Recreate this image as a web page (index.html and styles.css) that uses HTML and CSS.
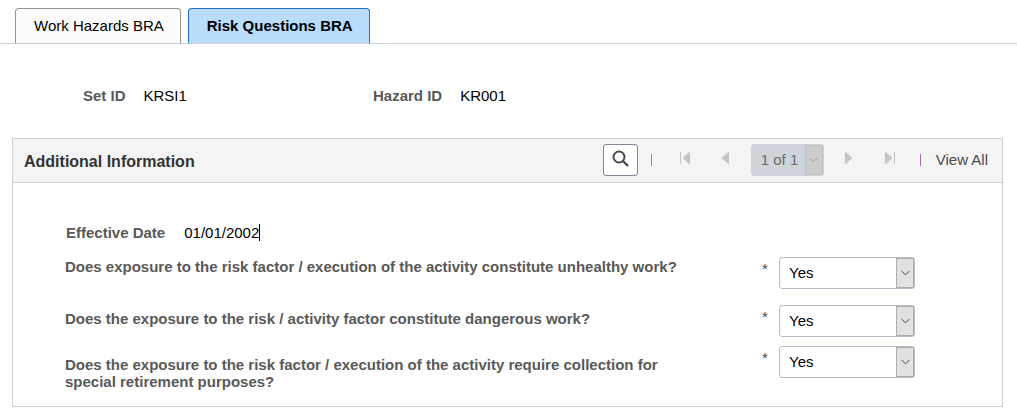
FILE: index.html
```html
<!DOCTYPE html>
<html lang="en">
<head>
  <meta charset="UTF-8">
  <title>Risk Questions BRA</title>
  <link rel="stylesheet" href="styles.css">
</head>
<body>
  <nav class="tabs">
    <button type="button" class="tab">Work Hazards BRA</button>
    <button type="button" class="tab active">Risk Questions BRA</button>
  </nav>

  <dl class="keys">
    <div class="key">
      <dt>Set ID</dt>
      <dd>KRSI1</dd>
    </div>
    <div class="key">
      <dt>Hazard ID</dt>
      <dd>KR001</dd>
    </div>
  </dl>

  <section class="panel">
    <header class="panel-header">
      <h2>Additional Information</h2>
      <div class="pager">
        <button type="button" class="search" aria-label="Find">
          <svg width="17" height="17" viewBox="0 0 17 17"><circle cx="7" cy="7" r="5.5" fill="none" stroke="#4a4a4a" stroke-width="2"/><path d="M11 11l5 5" stroke="#4a4a4a" stroke-width="2.4"/></svg>
        </button>
        <span class="divider green"></span>
        <button type="button" class="nav first" aria-label="First" disabled>
          <svg width="12" height="14" viewBox="0 0 12 14"><path d="M1.5 1v12" stroke="#c4c4c4"/><path d="M11 0.5v13L3.5 7z" fill="#c4c4c4"/></svg>
        </button>
        <button type="button" class="nav prev" aria-label="Previous" disabled>
          <svg width="8" height="14" viewBox="0 0 8 14"><path d="M8 0.5v13L0.5 7z" fill="#c4c4c4"/></svg>
        </button>
        <span class="select-box page-box">
          <select aria-label="Row" disabled>
            <option>1 of 1</option>
          </select>
          <span class="arrow"><svg width="9" height="6" viewBox="0 0 9 6"><path d="M0.5 0.8l4 4 4-4" fill="none" stroke="currentColor"/></svg></span>
        </span>
        <button type="button" class="nav next" aria-label="Next" disabled>
          <svg width="8" height="14" viewBox="0 0 8 14"><path d="M0 0.5v13L7.5 7z" fill="#c4c4c4"/></svg>
        </button>
        <button type="button" class="nav last" aria-label="Last" disabled>
          <svg width="12" height="14" viewBox="0 0 12 14"><path d="M10.5 1v12" stroke="#c4c4c4"/><path d="M1 0.5v13L8.5 7z" fill="#c4c4c4"/></svg>
        </button>
        <span class="divider purple"></span>
        <button type="button" class="view-all">View All</button>
      </div>
    </header>

    <div class="panel-body">
      <div class="date-row">
        <span class="date-label">Effective Date</span>
        <span class="date-value">01/01/2002</span>
      </div>

      <div class="question">
        <label for="q1">Does exposure to the risk factor / execution of the activity constitute unhealthy work?</label>
        <span class="required">*</span>
        <span class="select-box">
          <select id="q1" required>
            <option>Yes</option>
            <option>No</option>
          </select>
          <span class="arrow"><svg width="9" height="6" viewBox="0 0 9 6"><path d="M0.5 0.8l4 4 4-4" fill="none" stroke="currentColor"/></svg></span>
        </span>
      </div>

      <div class="question middle">
        <label for="q2">Does the exposure to the risk / activity factor constitute dangerous work?</label>
        <span class="required">*</span>
        <span class="select-box">
          <select id="q2" required>
            <option>Yes</option>
            <option>No</option>
          </select>
          <span class="arrow"><svg width="9" height="6" viewBox="0 0 9 6"><path d="M0.5 0.8l4 4 4-4" fill="none" stroke="currentColor"/></svg></span>
        </span>
      </div>

      <div class="question long">
        <label for="q3">Does the exposure to the risk factor / execution of the activity require collection for special retirement purposes?</label>
        <span class="required">*</span>
        <span class="select-box">
          <select id="q3" required>
            <option>Yes</option>
            <option>No</option>
          </select>
          <span class="arrow"><svg width="9" height="6" viewBox="0 0 9 6"><path d="M0.5 0.8l4 4 4-4" fill="none" stroke="currentColor"/></svg></span>
        </span>
      </div>
    </div>
  </section>
</body>
</html>
```

FILE: styles.css
```css
* {
  box-sizing: border-box;
}
body {
  margin: 0;
  background: #fff;
  color: #000;
  font-family: "Liberation Sans", Arial, sans-serif;
  font-size: 15px;
  line-height: 17px;
}
button, select {
  font: inherit;
  color: inherit;
}

/* tabs */
.tabs {
  display: flex;
  gap: 7px;
  padding: 8px 15px 0;
  border-bottom: 1px solid #cdd0d8;
}
.tab {
  height: 35px;
  padding: 0 16px 2px 18px;
  background: #fcfcfc;
  border: 1px solid #949494;
  border-bottom: none;
  border-radius: 4px 4px 0 0;
}
.tab.active {
  background: #b9dcfb;
  border-color: #1f6fc5;
  font-weight: bold;
}

/* key fields */
.keys {
  display: flex;
  margin: 0;
  padding: 43px 83px 34px;
}
.key {
  display: flex;
  gap: 18px;
  min-width: 290px;
}
.key dt {
  color: #595959;
  font-weight: bold;
}
.key dd {
  margin: 0;
}

/* panel */
.panel {
  margin: 0 14px 7px 12px;
  border: 1px solid #cdd0d8;
}
.panel-header {
  display: flex;
  justify-content: space-between;
  align-items: center;
  height: 44px;
  padding: 0 14px 2px 11px;
  background: #f4f4f4;
  border-bottom: 1px solid #cdd0d8;
}
.panel-header h2 {
  margin: 0;
  padding-top: 3px;
  color: #333;
  font-size: 16px;
}
.pager {
  display: flex;
  align-items: center;
  color: #4a4a4a;
}
.search {
  display: flex;
  align-items: center;
  justify-content: center;
  width: 35px;
  height: 32px;
  padding: 0 0 2px;
  background: #fff;
  border: 1px solid #7d8592;
  border-radius: 3px;
}
.divider {
  width: 1px;
  height: 12px;
}
.divider.green {
  margin: 0 27px 0 13px;
  background: #4fbf6f;
}
.divider.purple {
  margin: 0 15px 0 24px;
  background: #b565b5;
}
.nav {
  display: flex;
  padding: 0 0 3px;
  background: none;
  border: none;
}
.prev {
  margin: 0 22px 0 30px;
}
.next {
  margin: 0 31px 0 21px;
}
.view-all {
  padding: 0;
  background: none;
  border: none;
}

/* drop-downs */
.select-box {
  position: relative;
  width: 136px;
  height: 32px;
}
.select-box select {
  appearance: none;
  width: 100%;
  height: 100%;
  padding: 0 26px 2px 9px;
  background: #fff;
  border: 1px solid #b5bdc9;
  border-radius: 3px;
}
.arrow {
  position: absolute;
  top: 1px;
  right: 1px;
  bottom: 1px;
  display: flex;
  align-items: center;
  justify-content: center;
  width: 18px;
  background: #e1e1e1;
  border: 1px solid #adadad;
  color: #444;
  pointer-events: none;
}
.page-box {
  width: 73px;
}
.page-box select {
  padding: 0 19px 0 9px;
  background: #cfd4db;
  border-color: #cfd4db;
  color: #676b72;
  opacity: 1;
}
.page-box .arrow {
  background: #ccc;
  border-color: #bfbfbf;
  color: #999;
}

/* questions */
.panel-body {
  padding: 41px 52px 16px;
}
.date-row {
  display: flex;
  gap: 19px;
  padding-left: 1px;
  margin-bottom: 16px;
}
.date-label, .question label {
  color: #595959;
  font-weight: bold;
}
.date-value {
  border-right: 1px solid #000;
}
.question {
  display: grid;
  grid-template-columns: minmax(0, 697px) 17px 136px;
  align-items: start;
}
.question label {
  max-width: 620px;
  padding-top: 1px;
}
.question .required {
  padding-top: 3px;
  color: #4a4a4a;
}
.question.middle {
  margin: 16px 0 9px;
}
.question.middle label {
  padding-top: 5px;
}
.question.long label {
  padding-top: 10px;
}
```
